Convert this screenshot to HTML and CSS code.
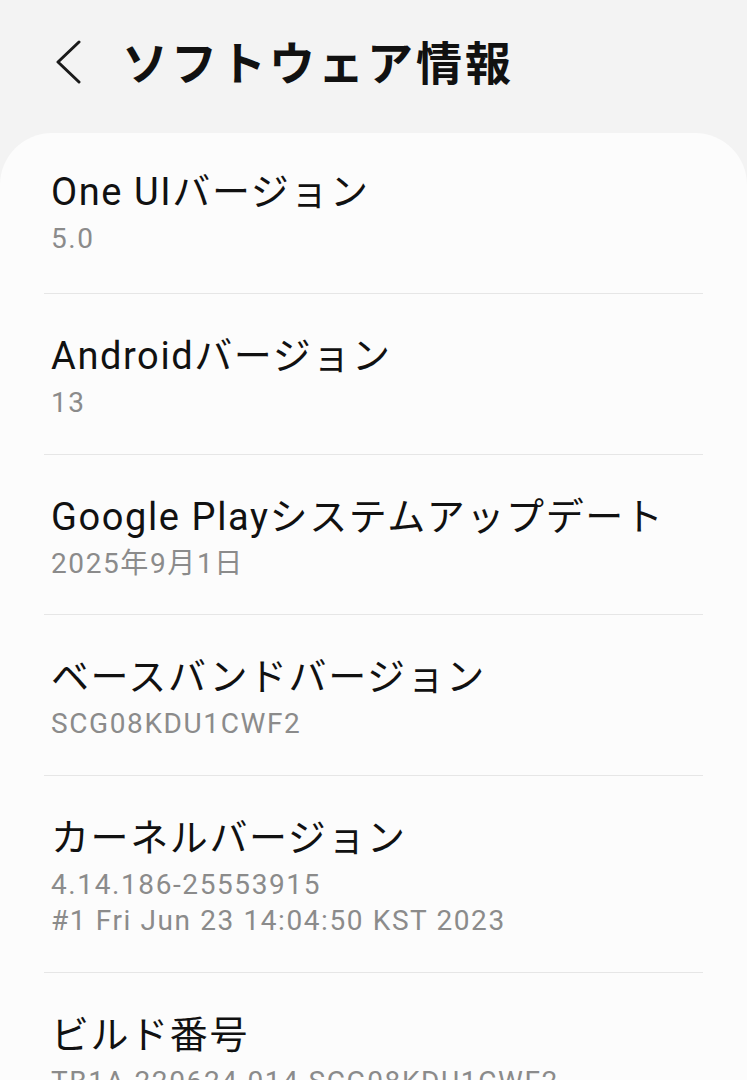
FILE: index.html
```html
<!DOCTYPE html>
<html lang="ja">
<head>
<meta charset="utf-8">
<title>ソフトウェア情報</title>
<link rel="stylesheet" href="styles.css">
</head>
<body>
<div class="screen">
  <header class="appbar">
    <button class="back" aria-label="戻る">
      <svg width="26" height="44" viewBox="0 0 26 44"><path d="M24 2 L3 22 L24 42" fill="none" stroke="#1a1a1a" stroke-width="3" stroke-linecap="round" stroke-linejoin="round"/></svg>
    </button>
    <h1 class="title">ソフトウェア情報</h1>
  </header>
  <main class="card">
    <div class="item">
      <div class="item-title">One UIバージョン</div>
      <div class="item-sub">5.0</div>
    </div>
    <div class="item">
      <div class="item-title">Androidバージョン</div>
      <div class="item-sub">13</div>
    </div>
    <div class="item">
      <div class="item-title">Google Playシステムアップデート</div>
      <div class="item-sub">2025年9月1日</div>
    </div>
    <div class="item">
      <div class="item-title">ベースバンドバージョン</div>
      <div class="item-sub">SCG08KDU1CWF2</div>
    </div>
    <div class="item">
      <div class="item-title">カーネルバージョン</div>
      <div class="item-sub">4.14.186-25553915</div>
      <div class="item-sub">#1 Fri Jun 23 14:04:50 KST 2023</div>
    </div>
    <div class="item">
      <div class="item-title">ビルド番号</div>
      <div class="item-sub">TB1A.220624.014.SCG08KDU1CWF2</div>
    </div>
  </main>
</div>
</body>
</html>
```
FILE: styles.css
```css
html, body {
  margin: 0;
  padding: 0;
  background: #f3f3f3;
}
body {
  font-family: Roboto, "Noto Sans CJK JP", sans-serif;
  color: #111;
  width: 747px;
  height: 1080px;
  overflow: hidden;
}
.screen {
  display: flex;
  flex-direction: column;
}
.appbar {
  height: 133px;
  display: flex;
  align-items: flex-start;
  box-sizing: border-box;
  padding-top: 40px;
}
.back {
  background: none;
  border: 0;
  padding: 0;
  margin-left: 55px;
  width: 67px;
  height: 44px;
  display: flex;
  align-items: center;
  justify-content: flex-start;
}
.title {
  margin: -7px 0 0 0;
  font-family: "Noto Sans CJK JP", sans-serif;
  font-weight: 700;
  font-size: 46px;
  line-height: 54px;
  letter-spacing: 3px;
  color: #111;
}
.card {
  background: #fcfcfc;
  border-radius: 52px 52px 0 0;
  padding: 0 44px;
  flex: 1;
}
.item {
  padding: 37px 0 32.7px 7px;
  border-top: 1px solid #e6e6e6;
}
.item:first-child {
  border-top: 0;
  padding-top: 34px;
  padding-bottom: 36px;
}
.item-title {
  font-size: 38px;
  line-height: 50px;
  letter-spacing: 1.6px;
  color: #111;
  white-space: nowrap;
}
.item-sub {
  font-size: 28px;
  line-height: 36px;
  letter-spacing: 1.6px;
  color: #8b8b8b;
  white-space: nowrap;
}
.item-title + .item-sub {
  margin-top: 4px;
}
```
